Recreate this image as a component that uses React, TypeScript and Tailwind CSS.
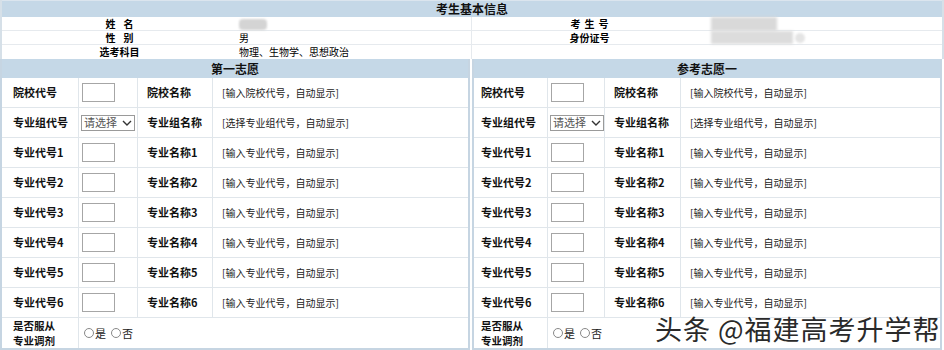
const rows = [
  { code: '院校代号', name: '院校名称', hint: '[输入院校代号，自动显示]', select: false },
  { code: '专业组代号', name: '专业组名称', hint: '[选择专业组代号，自动显示]', select: true },
  { code: '专业代号1', name: '专业名称1', hint: '[输入专业代号，自动显示]', select: false },
  { code: '专业代号2', name: '专业名称2', hint: '[输入专业代号，自动显示]', select: false },
  { code: '专业代号3', name: '专业名称3', hint: '[输入专业代号，自动显示]', select: false },
  { code: '专业代号4', name: '专业名称4', hint: '[输入专业代号，自动显示]', select: false },
  { code: '专业代号5', name: '专业名称5', hint: '[输入专业代号，自动显示]', select: false },
  { code: '专业代号6', name: '专业名称6', hint: '[输入专业代号，自动显示]', select: false },
];

interface PanelProps {
  title: string;
  cols: string;
  labelPad: string;
}

const Panel = ({ title, cols, labelPad }: PanelProps) => {
  return (
    <div className="border-2 border-t-0 border-[#c6d5e2] flex flex-col">
      <div className="h-[19px] bg-[#c5d8e7] flex items-center justify-center text-[12px] font-bold text-[#111]">
        {title}
      </div>
      {rows.map((row) => (
        <div key={row.code} className={`grid ${cols} h-[30px] border-b border-[#e0e6eb]`}>
          <div className={`flex items-center ${labelPad} text-[11px] font-bold text-[#111] border-r border-[#e0e6eb]`}>
            {row.code}
          </div>
          <div className="flex items-center pl-[2px] border-r border-[#e0e6eb]">
            {row.select ? (
              <div className="w-[54px] h-[16px] border border-[#9a9a9a] bg-white flex items-center justify-between px-[2px] text-[11px] text-[#555]">
                <span>请选择</span>
                <svg width="10" height="8" viewBox="0 0 10 8" fill="none" stroke="#333" strokeWidth="1.4">
                  <path d="M1 2l4 4 4-4" />
                </svg>
              </div>
            ) : (
              <div className="ml-[1px] w-[33px] h-[19px] border border-[#a6a6a6] bg-white" />
            )}
          </div>
          <div className="flex items-center pl-[9px] text-[11px] font-bold text-[#111] border-r border-[#e0e6eb]">
            {row.name}
          </div>
          <div className="flex items-center pl-[9px] text-[10px] text-[#222]">{row.hint}</div>
        </div>
      ))}
      <div className={`grid ${cols} h-[30px]`}>
        <div className={`flex items-center ${labelPad} border-r border-[#e0e6eb]`}>
          <div className="text-[10.5px] font-bold text-[#111] leading-[15px]">
            <div>是否服从</div>
            <div>专业调剂</div>
          </div>
        </div>
        <div className="col-span-3 flex items-center gap-[5px] pl-[5px] text-[11px] text-[#222]">
          <span className="flex items-center gap-[1px]">
            <span className="w-[10px] h-[10px] rounded-full border border-[#888] bg-white" />是
          </span>
          <span className="flex items-center gap-[1px]">
            <span className="w-[10px] h-[10px] rounded-full border border-[#888] bg-white" />否
          </span>
        </div>
      </div>
    </div>
  );
};

export default function App() {
  return (
    <div
      className="relative w-[944px] h-[350px] overflow-hidden bg-white"
      style={{ fontFamily: '"Noto Sans CJK SC", "Noto Sans", sans-serif' }}
    >
      <div className="border-x-2 border-[#d6e0e8]">
        <div className="h-[17px] bg-[#c5d8e7] border-t border-[#dbe5ee] flex items-center justify-center text-[12px] font-bold text-[#111]">
          考生基本信息
        </div>
        <div className="grid grid-cols-4 h-[14px] border-b border-[#e6eaee] text-[10px] leading-none">
          <div className="flex items-center justify-center font-bold tracking-[8px] pl-[8px]">姓名</div>
          <div className="flex items-center pl-[2px] border-r border-[#e6eaee]">
            <div className="w-[28px] h-[11px] rounded-[4px] bg-[#d4d4d4] blur-[1px]" />
          </div>
          <div className="flex items-center justify-center font-bold tracking-[4px] pl-[4px]">考生号</div>
          <div className="flex items-center pl-[4px]">
            <div className="w-[66px] h-[14px] bg-[#d9d9d9] blur-[1.5px]" />
          </div>
        </div>
        <div className="grid grid-cols-4 h-[14px] border-b border-[#e6eaee] text-[10px] leading-none">
          <div className="flex items-center justify-center font-bold tracking-[8px] pl-[8px]">性别</div>
          <div className="flex items-center pl-[2px] border-r border-[#e6eaee]">男</div>
          <div className="flex items-center justify-center font-bold">身份证号</div>
          <div className="flex items-center pl-[4px] gap-[2px]">
            <div className="w-[82px] h-[13px] bg-[#dcdcdc] blur-[1.5px]" />
            <div className="w-[10px] h-[10px] rounded-full bg-[#e4e4e4] blur-[1px]" />
          </div>
        </div>
        <div className="grid grid-cols-4 h-[14px] text-[10px] leading-none">
          <div className="flex items-center justify-center font-bold">选考科目</div>
          <div className="flex items-center pl-[2px] border-r border-[#e6eaee]">物理、生物学、思想政治</div>
          <div />
          <div />
        </div>
      </div>
      <div className="grid grid-cols-[470px_1fr] gap-[2px] pr-[2px]">
        <Panel title="第一志愿" cols="grid-cols-[77px_59px_75px_1fr]" labelPad="pl-[11px]" />
        <Panel title="参考志愿一" cols="grid-cols-[74px_57px_76px_1fr]" labelPad="pl-[7px]" />
      </div>
      <div
        className="absolute left-[655px] top-[315px] whitespace-nowrap text-[27px] leading-none tracking-[1px] text-[#2a2a2a]"
        style={{ textShadow: '0 0 2px #fff, 0 0 2px #fff' }}
      >
        头条 @福建高考升学帮
      </div>
    </div>
  );
}
